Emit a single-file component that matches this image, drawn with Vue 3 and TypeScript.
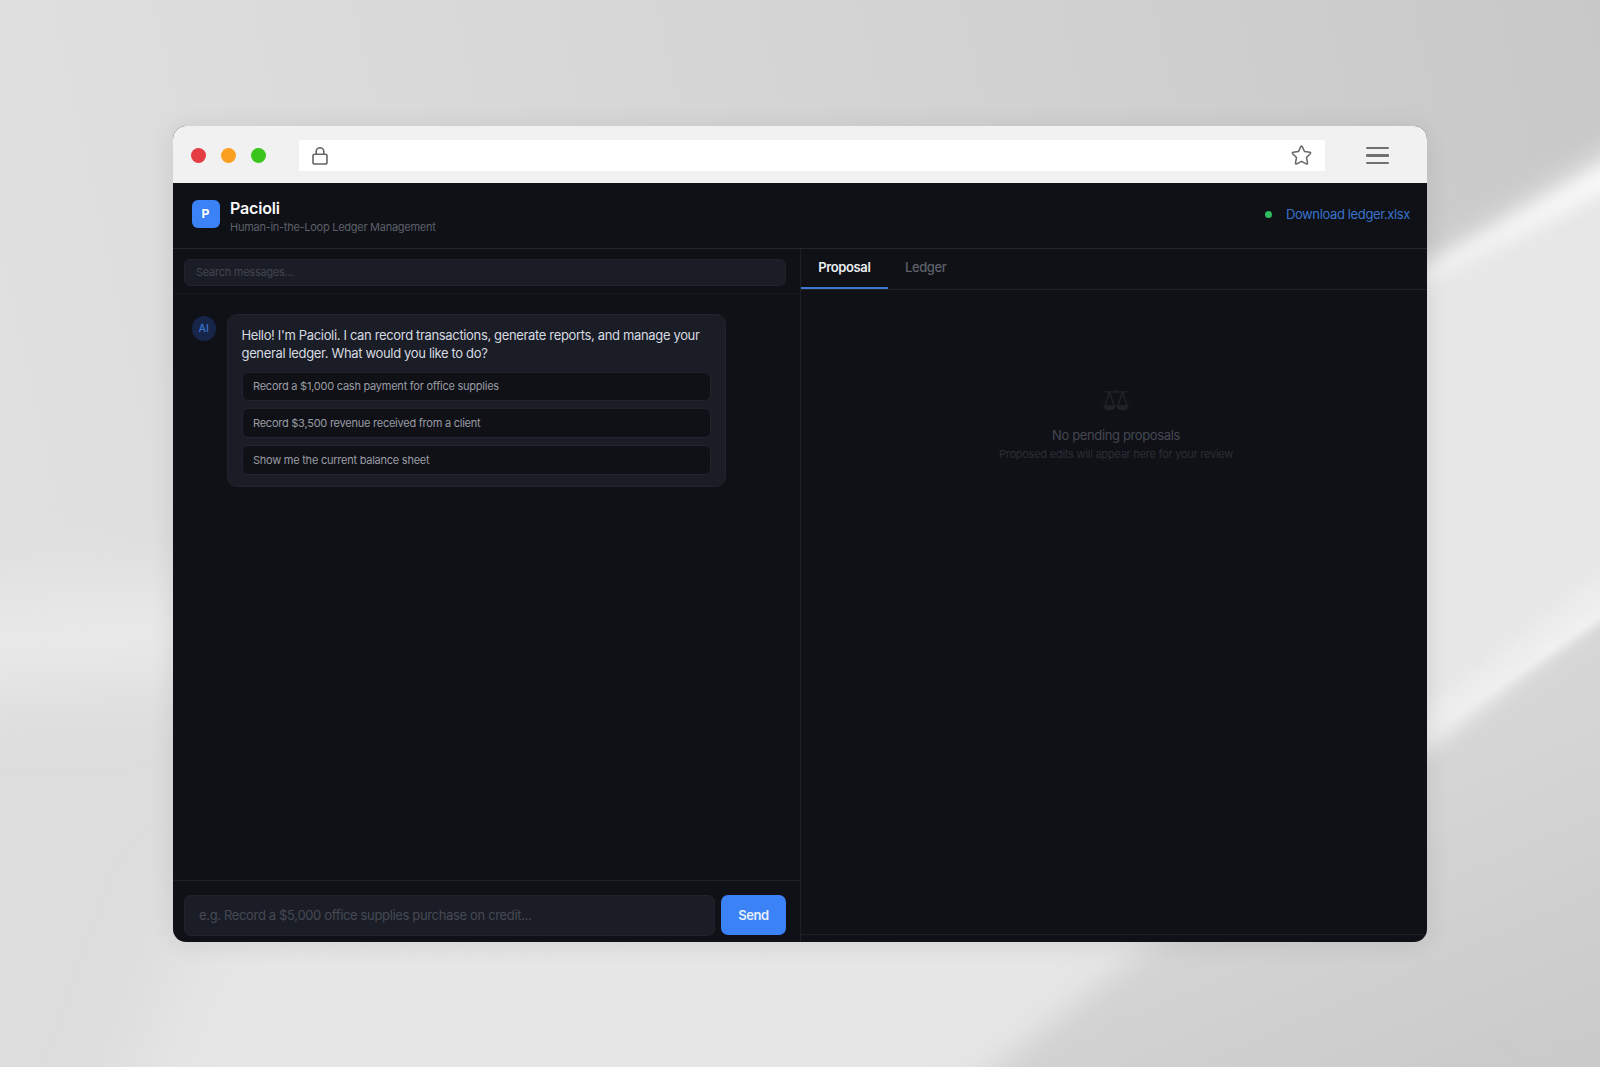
<script setup lang="ts">
import { ref } from 'vue'

const suggestions: string[] = [
  'Record a $1,000 cash payment for office supplies',
  'Record $3,500 revenue received from a client',
  'Show me the current balance sheet',
]
const tabs = ['Proposal', 'Ledger'] as const
const activeTab = ref<(typeof tabs)[number]>('Proposal')
const search = ref('')
const draft = ref('')
</script>

<template>
  <div class="stage">
    <svg class="backdrop" viewBox="0 0 1600 1067" preserveAspectRatio="none" aria-hidden="true">
      <defs>
        <linearGradient id="wall" x1="0" y1="350" x2="1600" y2="0" gradientUnits="userSpaceOnUse">
          <stop offset="0" stop-color="#e0e0e0" />
          <stop offset=".35" stop-color="#d8d8d8" />
          <stop offset=".7" stop-color="#d0d0d0" />
          <stop offset="1" stop-color="#c8c8c8" />
        </linearGradient>
        <linearGradient id="floor" x1="1400" y1="700" x2="1560" y2="1067" gradientUnits="userSpaceOnUse">
          <stop offset="0" stop-color="#d8d8d8" />
          <stop offset="1" stop-color="#cacaca" />
        </linearGradient>
        <linearGradient id="beam" x1="1420" y1="0" x2="1600" y2="0" gradientUnits="userSpaceOnUse">
          <stop offset="0" stop-color="#f0f0f0" />
          <stop offset="1" stop-color="#f8f8f8" />
        </linearGradient>
        <filter id="soft8" x="-30%" y="-30%" width="160%" height="160%"><feGaussianBlur stdDeviation="8" /></filter>
        <filter id="soft16" x="-30%" y="-30%" width="160%" height="160%"><feGaussianBlur stdDeviation="15" /></filter>
        <filter id="soft40" x="-50%" y="-90%" width="200%" height="280%"><feGaussianBlur stdDeviation="38" /></filter>
        <filter id="soft3" x="-30%" y="-30%" width="160%" height="160%"><feGaussianBlur stdDeviation="4" /></filter>
      </defs>
      <rect width="1600" height="1067" fill="url(#wall)" />
      <polygon points="-120,660 260,620 260,1180 -120,1180" fill="#dddddd" filter="url(#soft40)" />
      <polygon points="-120,610 300,580 300,670 -120,690" fill="#ebebeb" filter="url(#soft40)" />
      <polygon points="200,900 1300,860 1100,1180 100,1180" fill="#e6e6e6" filter="url(#soft40)" />
      <polygon points="1660,120 1400,280 1300,940 1000,1130 1660,1130" fill="#e7e7e7" filter="url(#soft16)" />
      <polygon points="1640,144 1410,276 1396,302 1640,174" fill="url(#beam)" filter="url(#soft8)" />
      <polygon points="1660,530 1400,730 1400,764 1660,572" fill="#ededed" filter="url(#soft8)" />
      <polygon points="1420,770 1150,945 940,1110 1680,1160 1680,770" fill="url(#floor)" filter="url(#soft16)" />
      <polygon points="1660,572 1400,778 1400,960 1660,1120" fill="url(#floor)" filter="url(#soft8)" />
      <polygon points="1640,574 1450,716 1440,726 1640,594" fill="#f2f2f2" filter="url(#soft3)" />
    </svg>

    <main class="window">
      <div class="chrome">
        <div class="lights"><i class="red"></i><i class="amber"></i><i class="green"></i></div>
        <div class="address">
          <svg width="16" height="18" viewBox="0 0 16 18" fill="none" stroke="#666" stroke-width="1.6">
            <rect x="1" y="7.2" width="14" height="9.8" rx="1.8" />
            <path d="M4.2 7V4.6a3.8 3.8 0 0 1 7.6 0V7" />
          </svg>
          <svg width="21" height="21" viewBox="0 0 21 21" fill="none" stroke="#666" stroke-width="1.5" stroke-linejoin="round">
            <path d="M9.7 1.7Q10.5.5 11.3 1.7L13.6 6.6 18.9 7.3Q20.2 7.7 19.3 8.8L15.5 12.5 16.5 17.9Q16.5 19.4 15.2 18.9L10.5 16.3 5.8 18.9Q4.5 19.4 4.5 17.9L5.5 12.5 1.7 8.8Q.8 7.7 2.1 7.3L7.4 6.6Z" />
          </svg>
        </div>
        <div class="burger"><i></i><i></i><i></i></div>
      </div>

      <header class="top">
        <div class="logo">P</div>
        <div class="brand">
          <h1>Pacioli</h1>
          <p>Human-in-the-Loop Ledger Management</p>
        </div>
        <span class="status"></span>
        <a class="download">Download ledger.xlsx</a>
      </header>

      <div class="panes">
        <section class="chat">
          <div class="searchbar"><input v-model="search" placeholder="Search messages..." /></div>
          <div class="messages">
            <div class="avatar">AI</div>
            <div class="bubble">
              <p>Hello! I'm Pacioli. I can record transactions, generate reports, and manage your<br />general ledger. What would you like to do?</p>
              <button v-for="s in suggestions" :key="s" class="option" @click="draft = s">{{ s }}</button>
            </div>
          </div>
          <div class="composer">
            <input v-model="draft" placeholder="e.g. Record a $5,000 office supplies purchase on credit..." />
            <button class="send">Send</button>
          </div>
        </section>

        <section class="review">
          <nav class="tabs">
            <button v-for="t in tabs" :key="t" :class="['tab', { active: t === activeTab }]" @click="activeTab = t">{{ t }}</button>
          </nav>
          <div class="empty">
            <svg width="26" height="22" viewBox="0 0 26 22" fill="none" stroke="#212529" stroke-width="1.3">
              <path d="M1.5 2.8H24.5M13 .5V4M6.5 3 1.8 17M6.5 3 11.2 17M19.5 3 14.8 17M19.5 3 24.2 17" />
              <path d="M1 17H12Q11 20.5 6.5 20.5T1 17ZM14 17H25Q24 20.5 19.5 20.5T14 17Z" fill="#1d2124" />
            </svg>
            <strong>No pending proposals</strong>
            <span>Proposed edits will appear here for your review</span>
          </div>
          <div class="footer"></div>
        </section>
      </div>
    </main>
  </div>
</template>

<style>
body { margin: 0; overflow: hidden; }
</style>

<style scoped>
* { box-sizing: border-box; }
.stage {
  position: relative;
  width: 1600px;
  height: 1067px;
  padding: 125.5px 0 0 173px;
  overflow: hidden;
  font-family: Inter, "Liberation Sans", sans-serif;
}
.backdrop { position: absolute; inset: 0; width: 100%; height: 100%; }
.window {
  position: relative;
  display: flex;
  flex-direction: column;
  width: 1254px;
  height: 816.5px;
  overflow: hidden;
  border-radius: 13px;
  background: #0f1117;
  box-shadow: 0 2px 26px rgba(0, 0, 0, .09);
}
.chrome {
  display: flex;
  align-items: center;
  flex: none;
  height: 57px;
  padding: 2px 38px 0 17.5px;
  background: #f1f1f1;
}
.lights { display: flex; gap: 15px; width: 108.5px; }
.lights i { width: 15px; height: 15px; border-radius: 50%; }
.red { background: #e43d43; }
.amber { background: #fb9f21; }
.green { background: #3bc41c; }
.address {
  display: flex;
  align-items: center;
  justify-content: space-between;
  width: 1026px;
  height: 31px;
  padding: 1px 13px 0 13px;
  background: #fff;
}
.burger { display: flex; flex-direction: column; gap: 5.2px; width: 23.5px; margin: 1px 0 0 auto; }
.burger i { height: 2.5px; border-radius: 1px; background: #707070; }

.top {
  display: flex;
  align-items: center;
  flex: none;
  height: 66.5px;
  padding: 0 17px 2px 18.5px;
  border-bottom: 1.5px solid #24262b;
}
.logo {
  display: grid;
  place-items: center;
  width: 28px;
  height: 28px;
  padding-bottom: 1px;
  border-radius: 6px;
  background: #3b82f6;
  color: #fff;
  font-size: 12.27px;
  font-weight: 700;
}
.brand { margin: 4.5px 0 0 10.5px; }
.brand h1 { margin: 0; color: #f8f8fa; font-size: 16px; font-weight: 600; line-height: 20px; letter-spacing: -.01em; }
.brand p { margin: 0; color: #5d6069; font-size: 11px; line-height: 18px; letter-spacing: -.0245em; }
.status { width: 7px; height: 7px; margin-left: auto; border-radius: 50%; background: #2fbd60; }
.download { margin: 0 0 0 14px; color: #3973cb; font-size: 13px; line-height: 18px; letter-spacing: -.0285em; }

.panes { display: flex; flex: 1; min-height: 0; }
.chat { display: flex; flex-direction: column; width: 628px; border-right: 1px solid #1d2026; }
input { outline: 0; border: 1px solid #1f242c; background: #1a1d26; color: #e4e6eb; font-family: inherit; }
.searchbar { height: 44.5px; padding: 9.5px 14px 0 11px; border-bottom: 1px solid #171a20; }
.searchbar input { display: block; width: 100%; height: 27px; padding: 0 11px; border-radius: 6px; font-size: 11px; letter-spacing: -.023em; }
.searchbar input::placeholder { color: #42464f; opacity: 1; }
.messages { display: flex; flex: 1; align-items: flex-start; padding: 20.5px 0 0 18.5px; }
.avatar {
  display: grid;
  place-items: center;
  width: 24.5px;
  height: 24.5px;
  margin-top: 2px;
  border-radius: 50%;
  background: #172548;
  color: #3b74cf;
  font-size: 10.51px;
  font-weight: 500;
}
.bubble {
  width: 499px;
  height: 172.5px;
  margin-left: 10.5px;
  padding: 10.5px 14px 0;
  border: 1px solid #20252d;
  border-radius: 10px;
  background: #1a1d26;
}
.bubble p { margin: 0 0 10px; color: #d7dae0; font-size: 13px; line-height: 18px; letter-spacing: -.0265em; white-space: nowrap; }
.option {
  display: block;
  width: 469px;
  height: 29.5px;
  margin-bottom: 7.25px;
  padding: 0 10.5px;
  border: 1px solid #20242c;
  border-radius: 6px;
  background: #0f1117;
  color: #9a9ca3;
  font: 11px Inter, sans-serif;
  letter-spacing: -.022em;
  text-align: left;
}
.composer { display: flex; gap: 6.5px; height: 62.5px; padding: 14px 14px 0 11px; border-top: 1px solid #1e2127; }
.composer input { flex: 1; height: 41.5px; padding: 0 14px; border-radius: 7px; font-size: 13px; letter-spacing: -.0265em; }
.composer input::placeholder { color: #464954; opacity: 1; }
.send { width: 65px; height: 40.5px; border: 0; border-radius: 7px; background: #3b82f6; color: #e6effe; font: 600 13px Inter, sans-serif; letter-spacing: -.03em; }

.review { display: flex; flex: 1; flex-direction: column; }
.tabs { display: flex; height: 41px; border-bottom: 1px solid #1f2228; }
.tab {
  height: 40px;
  padding: 0 17.3px 2px;
  border: 0;
  border-bottom: 2px solid transparent;
  background: none;
  color: #5d6068;
  font: 500 13px Inter, sans-serif;
  letter-spacing: -.03em;
}
.tab.active { border-color: #3c78cc; color: #eceef2; font-weight: 600; }
.empty { display: flex; flex: 1; flex-direction: column; align-items: center; padding: 99px 0 0 4px; }
.empty strong { margin-top: 14px; color: #444750; font-size: 13px; font-weight: 400; line-height: 20px; letter-spacing: -.0285em; }
.empty span { color: #2b2e35; font-size: 11px; line-height: 18px; letter-spacing: -.0215em; }
.footer { height: 8.5px; border-top: 1px solid #1b1e23; }
</style>
